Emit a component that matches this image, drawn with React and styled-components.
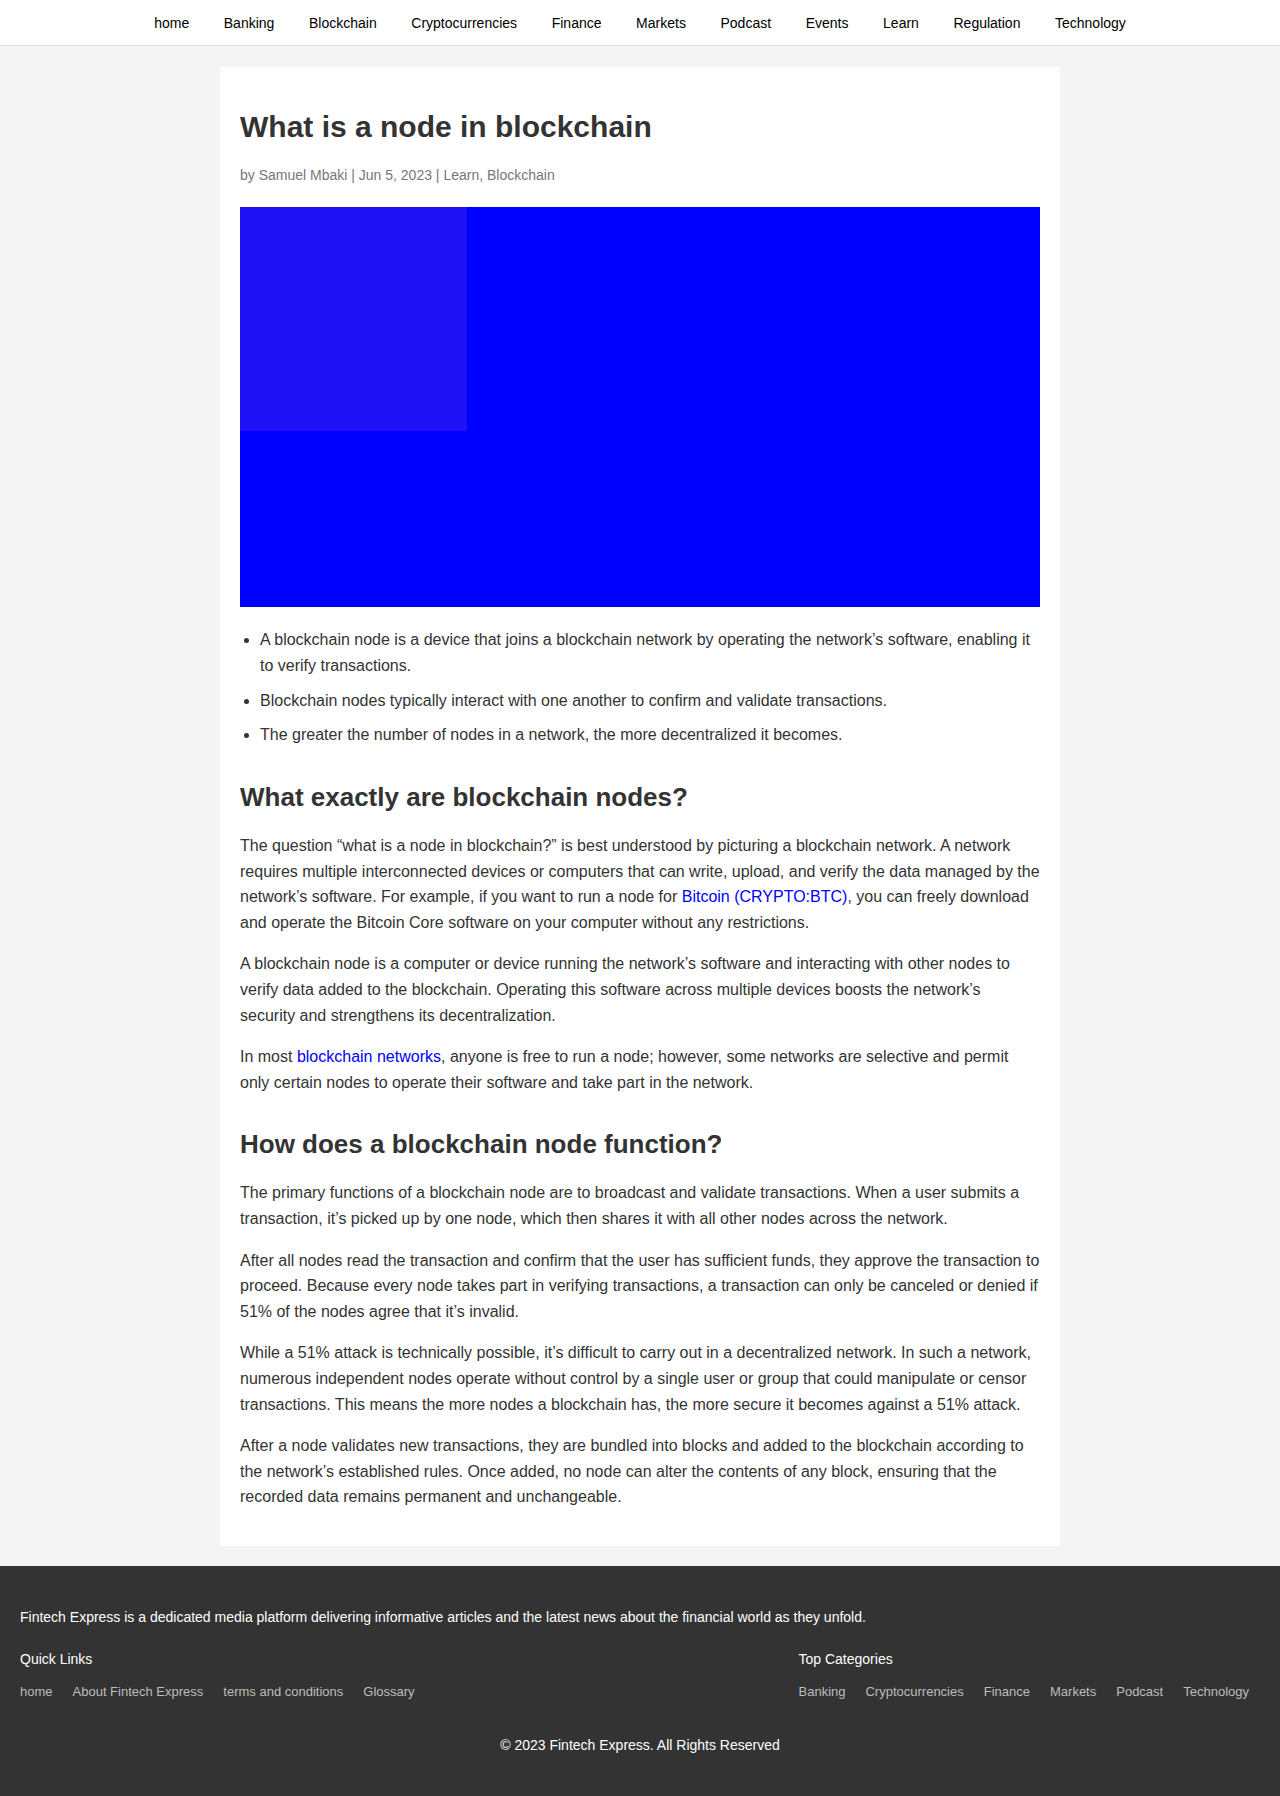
import React from 'react'
import styled, { createGlobalStyle } from 'styled-components'

const GlobalStyle = createGlobalStyle`
    body {
        margin: 0;
        background-color: #f4f4f4;
        font-family: "Liberation Sans", Arial, Helvetica, sans-serif;
        color: #333;
    }
    * { box-sizing: border-box; }
`

const NavBar = styled.nav`
    height: 46px;
    background-color: #fff;
    border-bottom: 1px solid #ddd;
    display: flex;
    align-items: center;
    justify-content: center;
`

const NavLink = styled.a`
    font-size: 14px;
    color: #000;
    text-decoration: none;
    padding: 0 17.3px;
    line-height: 1;
`

const Card = styled.article`
    width: 840px;
    margin: 21px auto 20px;
    background-color: #fff;
    padding: 20px;
`

const Title = styled.h1`
    font-size: 30px;
    line-height: 1.2;
    font-weight: bold;
    color: #333;
    margin: 22px 0 19px;
`

const Meta = styled.p`
    font-size: 14px;
    line-height: 1.6;
    color: #777;
    margin: 0 0 21px;
`

const Figure = styled.svg`
    display: block;
    width: 800px;
    height: 400px;
    margin-bottom: 20px;
`

const List = styled.ul`
    margin: 0;
    padding-left: 20px;
`

const Item = styled.li`
    font-size: 16px;
    line-height: 1.6;
    color: #333;
    margin-bottom: 9px;
`

const Heading = styled.h2`
    font-size: 26px;
    line-height: 1.2;
    font-weight: bold;
    color: #333;
    margin: 34px 0 20px;
`

const Para = styled.p`
    font-size: 16px;
    line-height: 1.6;
    color: #333;
    margin: 0 0 16px;
`

const Link = styled.a`
    color: #0000ff;
    text-decoration: none;
`

const Footer = styled.footer`
    background-color: #333;
    color: #fff;
    padding: 40px 20px;
    font-size: 14px;
    line-height: 1.6;
`

const About = styled.p`
    margin: 0 0 20px;
`

const Columns = styled.div`
    display: flex;
    justify-content: space-between;
    margin-bottom: 31px;
`

const Column = styled.div`
    padding-right: ${p => p.$inset || 0}px;
`

const ColumnTitle = styled.h4`
    font-size: 14px;
    font-weight: normal;
    margin: 0 0 11px;
`

const LinkRow = styled.div`
    display: flex;
    gap: 20px;
`

const FooterLink = styled.a`
    font-size: 13px;
    color: #bdbdbd;
    text-decoration: none;
`

const Copyright = styled.p`
    margin: 0;
    text-align: center;
`

const navItems = ['home', 'Banking', 'Blockchain', 'Cryptocurrencies', 'Finance', 'Markets', 'Podcast', 'Events', 'Learn', 'Regulation', 'Technology']
const quickLinks = ['home', 'About Fintech Express', 'terms and conditions', 'Glossary']
const topCategories = ['Banking', 'Cryptocurrencies', 'Finance', 'Markets', 'Podcast', 'Technology']

const App = () => {
    return (
        <>
            <GlobalStyle />
            <NavBar>
                {navItems.map(item => <NavLink key={item} href="#">{item}</NavLink>)}
            </NavBar>

            <Card>
                <Title>What is a node in blockchain</Title>
                <Meta>by Samuel Mbaki | Jun 5, 2023 | Learn, Blockchain</Meta>
                <Figure viewBox="0 0 800 400">
                    <rect width="800" height="400" fill="#0000ff" />
                    <rect width="227" height="224" fill="#1f10f5" />
                </Figure>

                <List>
                    <Item>A blockchain node is a device that joins a blockchain network by operating the network’s software, enabling it to verify transactions.</Item>
                    <Item>Blockchain nodes typically interact with one another to confirm and validate transactions.</Item>
                    <Item>The greater the number of nodes in a network, the more decentralized it becomes.</Item>
                </List>

                <Heading>What exactly are blockchain nodes?</Heading>
                <Para>
                    The question “what is a node in blockchain?” is best understood by picturing a blockchain network. A network requires multiple interconnected devices or computers that can write, upload, and verify the data managed by the network’s software. For example, if you want to run a node for <Link href="#">Bitcoin (CRYPTO:BTC)</Link>, you can freely download and operate the Bitcoin Core software on your computer without any restrictions.
                </Para>
                <Para>
                    A blockchain node is a computer or device running the network’s software and interacting with other nodes to verify data added to the blockchain. Operating this software across multiple devices boosts the network’s security and strengthens its decentralization.
                </Para>
                <Para>
                    In most <Link href="#">blockchain networks</Link>, anyone is free to run a node; however, some networks are selective and permit only certain nodes to operate their software and take part in the network.
                </Para>

                <Heading>How does a blockchain node function?</Heading>
                <Para>
                    The primary functions of a blockchain node are to broadcast and validate transactions. When a user submits a transaction, it’s picked up by one node, which then shares it with all other nodes across the network.
                </Para>
                <Para>
                    After all nodes read the transaction and confirm that the user has sufficient funds, they approve the transaction to proceed. Because every node takes part in verifying transactions, a transaction can only be canceled or denied if 51% of the nodes agree that it’s invalid.
                </Para>
                <Para>
                    While a 51% attack is technically possible, it’s difficult to carry out in a decentralized network. In such a network, numerous independent nodes operate without control by a single user or group that could manipulate or censor transactions. This means the more nodes a blockchain has, the more secure it becomes against a 51% attack.
                </Para>
                <Para>
                    After a node validates new transactions, they are bundled into blocks and added to the blockchain according to the network’s established rules. Once added, no node can alter the contents of any block, ensuring that the recorded data remains permanent and unchangeable.
                </Para>
            </Card>

            <Footer>
                <About>Fintech Express is a dedicated media platform delivering informative articles and the latest news about the financial world as they unfold.</About>
                <Columns>
                    <Column>
                        <ColumnTitle>Quick Links</ColumnTitle>
                        <LinkRow>
                            {quickLinks.map(l => <FooterLink key={l} href="#">{l}</FooterLink>)}
                        </LinkRow>
                    </Column>
                    <Column $inset={11}>
                        <ColumnTitle>Top Categories</ColumnTitle>
                        <LinkRow>
                            {topCategories.map(l => <FooterLink key={l} href="#">{l}</FooterLink>)}
                        </LinkRow>
                    </Column>
                </Columns>
                <Copyright>© 2023 Fintech Express. All Rights Reserved</Copyright>
            </Footer>
        </>
    )
}

export default App
